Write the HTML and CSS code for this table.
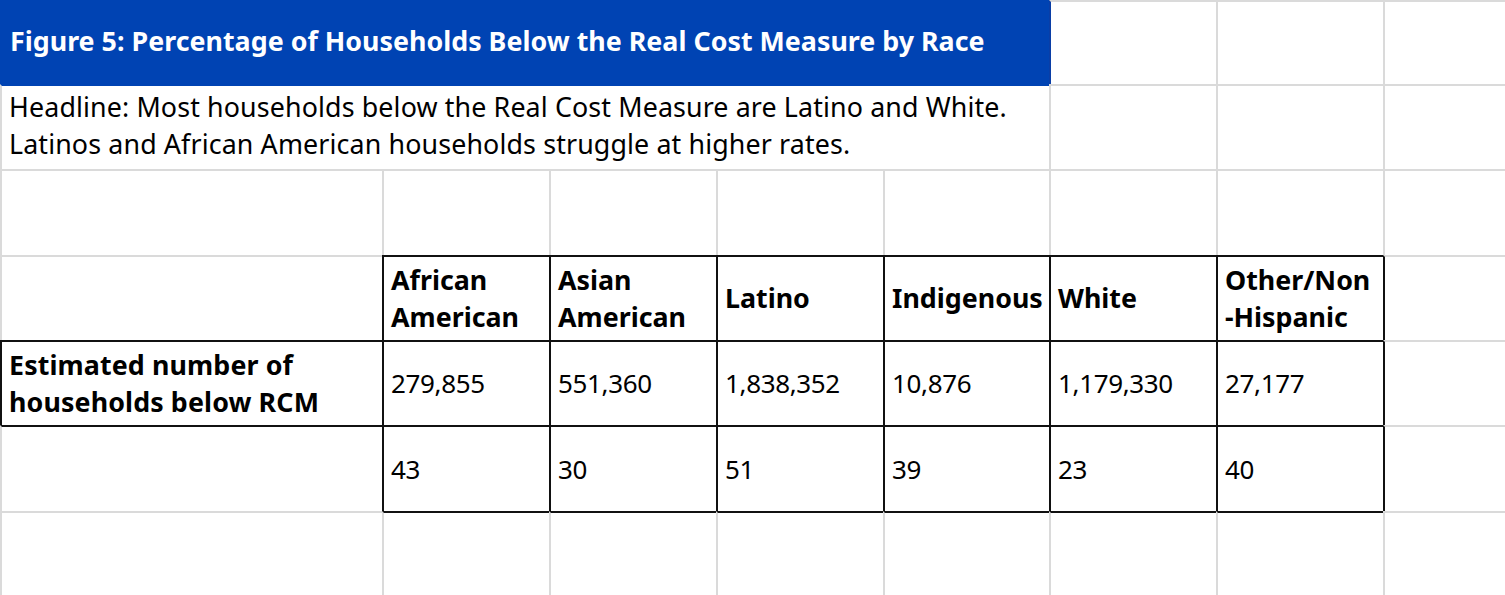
FILE: index.html
```html
<!DOCTYPE html>
<html lang="en">
<head>
<meta charset="utf-8">
<title>Figure 5</title>
<link rel="stylesheet" href="styles.css">
</head>
<body>
<div class="sheet">
  <div class="c title">Figure 5: Percentage of Households Below the Real Cost Measure by Race</div>
  <div class="c blue-l"></div>
  <div class="c"></div>
  <div class="c"></div>

  <div class="c headline">Headline: Most households below the Real Cost Measure are Latino and White.<br>Latinos and African American households struggle at higher rates.</div>
  <div class="c"></div>
  <div class="c"></div>
  <div class="c"></div>

  <div class="c"></div>
  <div class="c"></div>
  <div class="c"></div>
  <div class="c"></div>
  <div class="c"></div>
  <div class="c"></div>
  <div class="c"></div>
  <div class="c"></div>

  <div class="c"></div>
  <div class="c dt dl b">African<br>American</div>
  <div class="c dt dl b">Asian<br>American</div>
  <div class="c dt dl b">Latino</div>
  <div class="c dt dl b">Indigenous</div>
  <div class="c dt dl b">White</div>
  <div class="c dt dl b">Other/Non<br>-Hispanic</div>
  <div class="c dl"></div>

  <div class="c dt dl b lab">Estimated number of<br>households below RCM</div>
  <div class="c dt dl n">279,855</div>
  <div class="c dt dl n">551,360</div>
  <div class="c dt dl n">1,838,352</div>
  <div class="c dt dl n">10,876</div>
  <div class="c dt dl n">1,179,330</div>
  <div class="c dt dl n">27,177</div>
  <div class="c dl"></div>

  <div class="c dt"></div>
  <div class="c dt dl n">43</div>
  <div class="c dt dl n">30</div>
  <div class="c dt dl n">51</div>
  <div class="c dt dl n">39</div>
  <div class="c dt dl n">23</div>
  <div class="c dt dl n">40</div>
  <div class="c dl"></div>

  <div class="c"></div>
  <div class="c dt"></div>
  <div class="c dt"></div>
  <div class="c dt"></div>
  <div class="c dt"></div>
  <div class="c dt"></div>
  <div class="c dt"></div>
  <div class="c"></div>
</div>
</body>
</html>
```
FILE: styles.css
```css
html, body {
  margin: 0;
  padding: 0;
  background: #ffffff;
  overflow: hidden;
}

.sheet {
  display: grid;
  grid-template-columns: 382px 167px 167px 167px 166px 167px 167px 122px;
  grid-template-rows: 84px 85px 86px 85px 85px 86px 84px;
  width: 1505px;
  height: 595px;
  font-family: "Noto Sans", "Liberation Sans", sans-serif;
  font-size: 26.8px;
  line-height: 36.5px;
  color: #000000;
}

.c {
  box-sizing: border-box;
  border-top: 2px solid #dadada;
  border-left: 2px solid #dadada;
  padding: 0 2px 0 7px;
  display: flex;
  align-items: center;
  white-space: nowrap;
  overflow: visible;
}

.title {
  grid-column: 1 / 6;
  background: #0043b3;
  border-color: #0043b3;
  color: #ffffff;
  font-weight: 700;
  padding-left: 8px;
  padding-bottom: 3px;
  letter-spacing: 0.02px;
}

.blue-l {
  border-left-color: #0a3ea6;
}

.headline {
  grid-column: 1 / 6;
  border-top-color: #0043b3;
  display: block;
  padding-top: 3px;
  letter-spacing: 0.13px;
}

.b {
  font-weight: 700;
}

.lab {
  letter-spacing: 0.12px;
}

.n {
  font-size: 26px;
  letter-spacing: -0.35px;
}

.dt {
  border-top-color: #111111;
}

.dl {
  border-left-color: #111111;
}
```
